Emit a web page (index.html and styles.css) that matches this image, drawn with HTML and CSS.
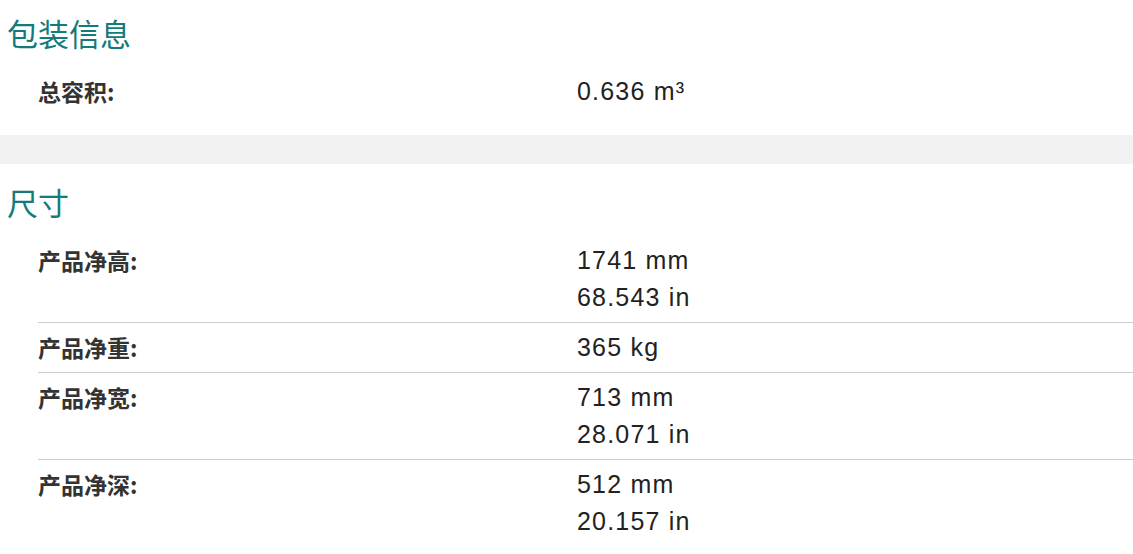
FILE: index.html
```html
<!DOCTYPE html>
<html lang="zh-CN">
<head>
<meta charset="utf-8">
<title>规格</title>
<link rel="stylesheet" href="styles.css">
</head>
<body>
<section class="section first">
  <h2 class="title">包装信息</h2>
  <div class="table">
    <div class="row">
      <div class="label">总容积:</div>
      <div class="value"><div>0.636 m³</div></div>
    </div>
  </div>
</section>
<div class="band"></div>
<section class="section">
  <h2 class="title">尺寸</h2>
  <div class="table">
    <div class="row">
      <div class="label">产品净高:</div>
      <div class="value"><div>1741 mm</div><div>68.543 in</div></div>
    </div>
    <div class="row">
      <div class="label">产品净重:</div>
      <div class="value"><div>365 kg</div></div>
    </div>
    <div class="row">
      <div class="label">产品净宽:</div>
      <div class="value"><div>713 mm</div><div>28.071 in</div></div>
    </div>
    <div class="row">
      <div class="label">产品净深:</div>
      <div class="value"><div>512 mm</div><div>20.157 in</div></div>
    </div>
  </div>
</section>
</body>
</html>
```
FILE: styles.css
```css
html, body {
  margin: 0;
  padding: 0;
  background: #ffffff;
}
body {
  font-family: "Liberation Sans", Arial, "Noto Sans CJK SC", sans-serif;
  color: #222222;
  overflow: hidden;
}
.section {
  padding: 13px 0 0 0;
}
.section.first {
  padding-bottom: 19px;
}
.band + .section {
  padding-top: 18px;
}
.title {
  margin: 0 0 14px 0;
  padding-left: 7px;
  font-family: "Noto Sans CJK SC", "Microsoft YaHei", sans-serif;
  font-weight: 400;
  font-size: 31px;
  line-height: 40px;
  color: #137b7b;
}
.band {
  height: 29px;
  background: #f2f2f2;
}
.table {
  margin-left: 38px;
}
.row {
  display: grid;
  grid-template-columns: 539px 1fr;
  padding: 6px 0 6px 0;
}
.row + .row {
  border-top: 1px solid #cccccc;
}
.label {
  font-family: "Noto Sans CJK SC", "Microsoft YaHei", sans-serif;
  font-weight: 700;
  font-size: 23px;
  line-height: 37px;
  color: #333333;
}
.value {
  font-family: "Liberation Sans", Arial, sans-serif;
  font-size: 25px;
  line-height: 37px;
  letter-spacing: 1.2px;
  color: #222222;
}
```
